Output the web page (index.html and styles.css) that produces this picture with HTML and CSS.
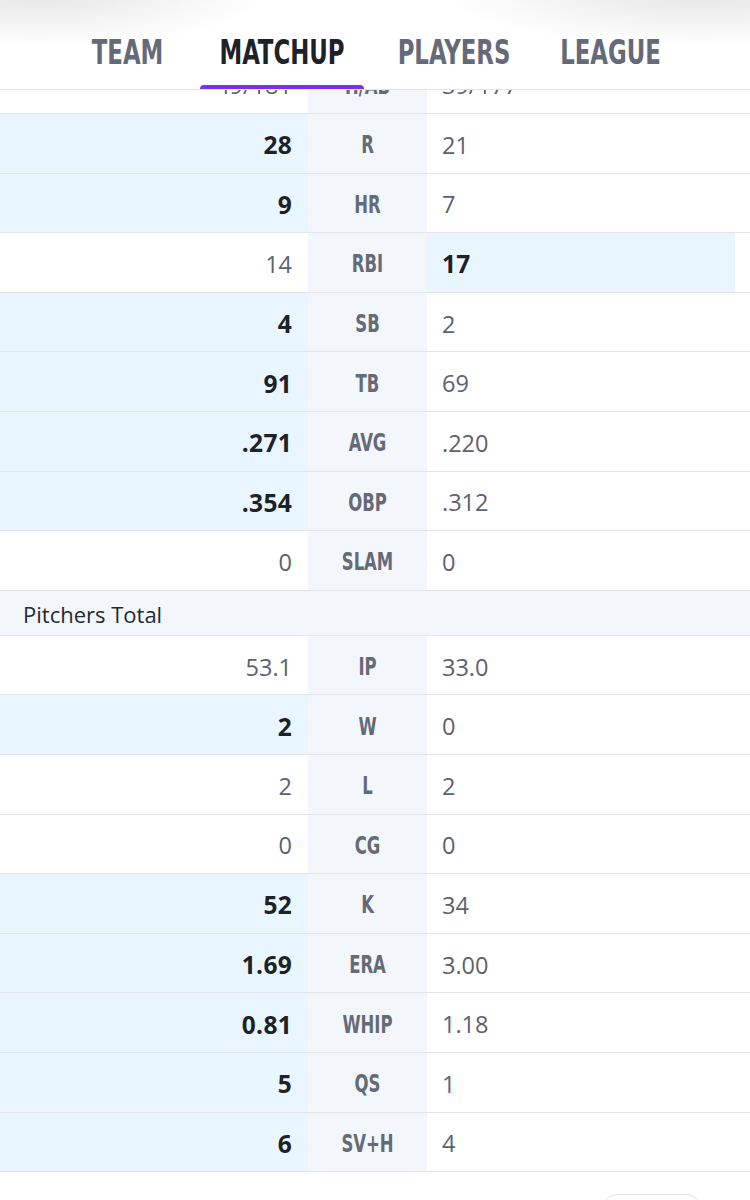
FILE: index.html
```html
<!DOCTYPE html>
<html>
<head>
<meta charset="utf-8">
<link rel="stylesheet" href="styles.css">
</head>
<body>
<div class="app">
  <header class="nav">
    <div class="tab t-team"><span class="tab-text">TEAM</span></div>
    <div class="tab t-matchup active"><span class="tab-text">MATCHUP</span></div>
    <div class="tab t-players"><span class="tab-text">PLAYERS</span></div>
    <div class="tab t-league"><span class="tab-text">LEAGUE</span></div>
  </header>
  <main class="table">
    <div class="row partial">
      <div class="row-inner">
        <div class="cell left">49/181</div>
        <div class="cell mid"><span class="lbl">H/AB</span></div>
        <div class="cell right">39/177</div>
      </div>
    </div>
    <div class="row"><div class="cell left win">28</div><div class="cell mid"><span class="lbl">R</span></div><div class="cell right">21</div></div>
    <div class="row"><div class="cell left win">9</div><div class="cell mid"><span class="lbl">HR</span></div><div class="cell right">7</div></div>
    <div class="row"><div class="cell left">14</div><div class="cell mid"><span class="lbl">RBI</span></div><div class="cell right win">17</div></div>
    <div class="row"><div class="cell left win">4</div><div class="cell mid"><span class="lbl">SB</span></div><div class="cell right">2</div></div>
    <div class="row"><div class="cell left win">91</div><div class="cell mid"><span class="lbl">TB</span></div><div class="cell right">69</div></div>
    <div class="row"><div class="cell left win">.271</div><div class="cell mid"><span class="lbl">AVG</span></div><div class="cell right">.220</div></div>
    <div class="row"><div class="cell left win">.354</div><div class="cell mid"><span class="lbl">OBP</span></div><div class="cell right">.312</div></div>
    <div class="row"><div class="cell left">0</div><div class="cell mid"><span class="lbl">SLAM</span></div><div class="cell right">0</div></div>
    <div class="section">Pitchers Total</div>
    <div class="row"><div class="cell left">53.1</div><div class="cell mid"><span class="lbl">IP</span></div><div class="cell right">33.0</div></div>
    <div class="row"><div class="cell left win">2</div><div class="cell mid"><span class="lbl">W</span></div><div class="cell right">0</div></div>
    <div class="row"><div class="cell left">2</div><div class="cell mid"><span class="lbl">L</span></div><div class="cell right">2</div></div>
    <div class="row"><div class="cell left">0</div><div class="cell mid"><span class="lbl">CG</span></div><div class="cell right">0</div></div>
    <div class="row"><div class="cell left win">52</div><div class="cell mid"><span class="lbl">K</span></div><div class="cell right">34</div></div>
    <div class="row"><div class="cell left win">1.69</div><div class="cell mid"><span class="lbl">ERA</span></div><div class="cell right">3.00</div></div>
    <div class="row"><div class="cell left win">0.81</div><div class="cell mid"><span class="lbl">WHIP</span></div><div class="cell right">1.18</div></div>
    <div class="row"><div class="cell left win">5</div><div class="cell mid"><span class="lbl">QS</span></div><div class="cell right">1</div></div>
    <div class="row"><div class="cell left win">6</div><div class="cell mid"><span class="lbl">SV+H</span></div><div class="cell right">4</div></div>
  </main>
  <footer class="footer"><div class="pill"></div></footer>
</div>
</body>
</html>
```

FILE: styles.css
```css
html, body {
  margin: 0;
  padding: 0;
  background: #ffffff;
}

.app {
  width: 750px;
  font-family: "Open Sans", "Noto Sans", sans-serif;
}

.nav {
  height: 89px;
  border-bottom: 1px solid #e1e5ea;
  display: flex;
  justify-content: center;
  gap: 18px;
  background:
    radial-gradient(ellipse 230px 55px at 40px -8px, rgba(0,0,0,0.10), rgba(0,0,0,0) 100%),
    radial-gradient(ellipse 260px 55px at 700px -8px, rgba(0,0,0,0.10), rgba(0,0,0,0) 100%),
    #ffffff;
}

.tab {
  display: flex;
  flex-direction: column;
  align-items: center;
  padding-top: 40.5px;
  font-family: "DejaVu Sans Condensed", "DejaVu Sans", sans-serif;
  font-weight: 700;
  font-size: 25.4px;
  line-height: 1;
  color: #646a78;
}

.t-team { flex: 0 0 109px; }
.t-matchup { flex: 0 0 164px; }
.t-players { flex: 0 0 144px; }
.t-league { flex: 0 0 133px; }

.tab-text {
  display: inline-block;
  white-space: nowrap;
  transform: scaleY(1.3);
  transform-origin: center;
}

.tab::after {
  content: "";
  display: block;
  align-self: stretch;
  margin-top: auto;
  height: 0;
}

.tab.active {
  color: #1d2228;
}

.tab.active::after {
  height: 4px;
  background: #7b2ff0;
  border-radius: 4px 4px 0 0;
}

.table {
  display: flex;
  flex-direction: column;
}

.row {
  display: grid;
  grid-template-columns: 308px 119px 1fr;
  height: 58.6px;
  border-bottom: 1px solid #e1e5ea;
}

.row.partial {
  display: flex;
  flex-direction: column;
  justify-content: flex-end;
  height: 23px;
  overflow: hidden;
}

.row-inner {
  display: grid;
  grid-template-columns: 308px 119px 1fr;
  flex: 0 0 58.6px;
  height: 58.6px;
}

.cell {
  display: flex;
  align-items: center;
  padding-top: 3px;
  font-size: 23.5px;
  color: #5b6270;
}

.cell.left {
  justify-content: flex-end;
  padding-right: 16px;
}

.cell.mid {
  justify-content: center;
  background: #f3f6fa;
  font-family: "DejaVu Sans Condensed", "DejaVu Sans", sans-serif;
  font-weight: 700;
  font-size: 18.3px;
  color: #646a77;
}

.lbl {
  display: inline-block;
  white-space: nowrap;
  transform: scaleY(1.31);
  transform-origin: center;
}

.cell.right {
  padding-left: 15px;
}

.cell.win {
  background: #eaf6ff;
  color: #1d2128;
  font-weight: 700;
  font-size: 24.5px;
  letter-spacing: 0.3px;
}

.cell.right.win {
  margin-right: 15px;
}

.section {
  border-bottom: 1px solid #e1e5ea;
  background: #f3f6fa;
  display: flex;
  align-items: center;
  padding: 2px 0 0 23px;
  box-sizing: border-box;
  height: 45px;
  font-size: 22px;
  font-weight: 500;
  color: #232a31;
}

.footer {
  display: flex;
  justify-content: flex-end;
  padding: 22px 47px 0 0;
}

.pill {
  width: 101px;
  height: 40px;
  border: 1.5px solid #dde1e6;
  border-radius: 18px;
}
```
